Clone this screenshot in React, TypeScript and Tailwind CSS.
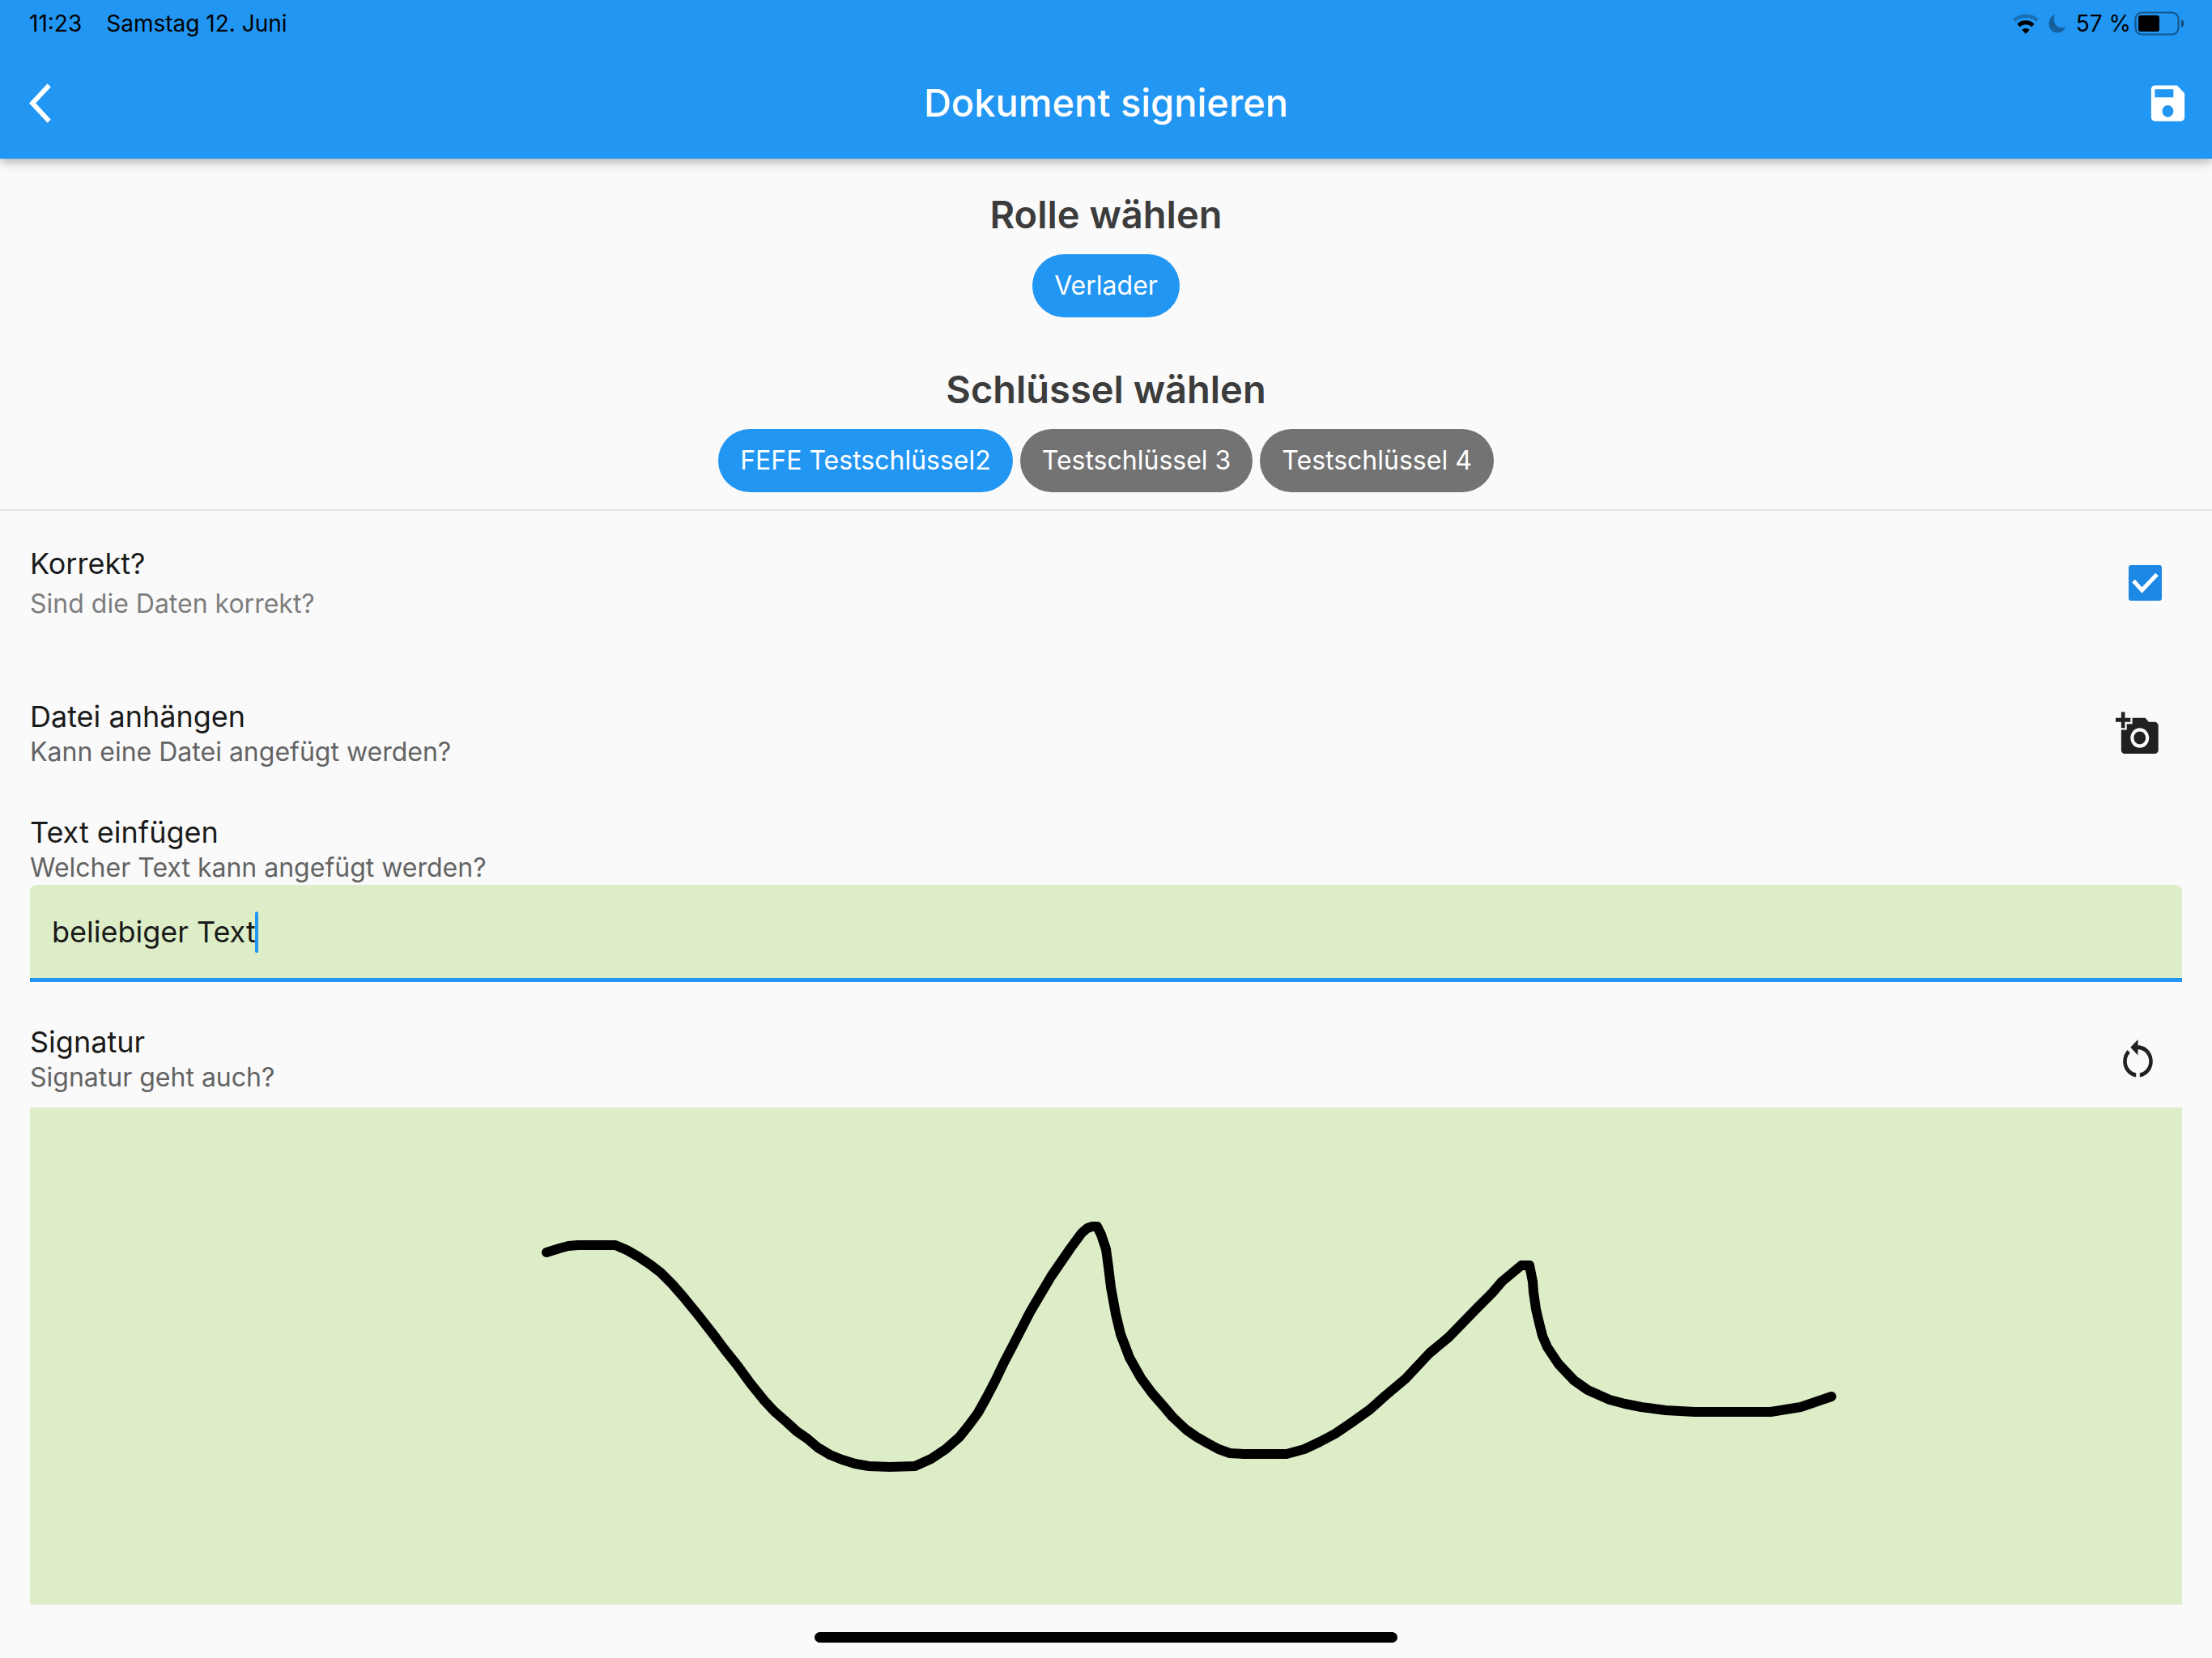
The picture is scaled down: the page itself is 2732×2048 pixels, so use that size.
import React, { useState } from "react";
import type { ReactNode } from "react";

function WifiIcon() {
  return (
    <svg className="h-[25px] w-8" viewBox="0 0 32 25" fill="none" aria-hidden="true">
      <path d="M1.500 8.500C9.500.9 22.500.9 30.500 8.500" stroke="#000" strokeOpacity=".25" strokeWidth="4.400" />
      <path d="M7 14.500c5-5 13-5 18 0" stroke="#000" strokeWidth="4.800" />
      <path d="M11.300 20c2.700-2.600 6.700-2.600 9.400 0L16 24.800z" fill="#000" />
    </svg>
  );
}

function MoonIcon() {
  return (
    <svg className="h-6 w-[22px]" viewBox="0 0 22 24" aria-hidden="true">
      <path
        d="M7.800.8C4 2.500.5 6.800.5 12.200.5 18.600 5.300 23.500 11.500 23.500c4.600 0 8.300-2.800 9.800-7.200-1.500.7-2.800.9-4.300.9-6 0-10-4-10-10.200 0-2.200.2-4.200.8-6.200z"
        fill="#000"
        fillOpacity=".35"
      />
    </svg>
  );
}

function BatteryIcon() {
  return (
    <svg className="h-[30px] w-[62px]" viewBox="0 0 62 30" fill="none" aria-hidden="true">
      <rect x="1.500" y="1.500" width="53" height="27" rx="8" stroke="#000" strokeOpacity=".42" strokeWidth="2.200" />
      <rect x="5" y="5" width="26" height="20" rx="3" fill="#000" />
      <path d="M58 10c2 .9 3.400 2.700 3.400 5s-1.400 4.100-3.400 5z" fill="#000" fillOpacity=".5" />
    </svg>
  );
}

function MaterialIcon({ d }: { d: string }) {
  return (
    <svg className="h-[59px] w-[55px]" viewBox="0 0 24 24" preserveAspectRatio="none" fill="currentColor" aria-hidden="true">
      <path d={d} />
    </svg>
  );
}

const icons = {
  back: "M11.670 3.870L9.900 2.100 0 12l9.900 9.900 1.770-1.770L3.540 12z",
  save: "M17 3H5c-1.110 0-2 .9-2 2v14c0 1.100.89 2 2 2h14c1.100 0 2-.9 2-2V7l-4-4zm-5 16c-1.660 0-3-1.340-3-3s1.340-3 3-3 3 1.340 3 3-1.340 3-3 3zm3-10H5V5h10v4z",
  addPhoto:
    "M3 4V1h2v3h3v2H5v3H3V6H0V4h3zm3 6V7h3V4h7l1.830 2H21c1.100 0 2 .9 2 2v12c0 1.100-.9 2-2 2H5c-1.100 0-2-.9-2-2V10h3zm7 9c2.760 0 5-2.240 5-5s-2.240-5-5-5-5 2.240-5 5 2.240 5 5 5zm-3.200-5c0 1.770 1.430 3.200 3.200 3.200s3.200-1.430 3.200-3.200-1.430-3.200-3.200-3.200-3.200 1.430-3.200 3.200z",
  reset:
    "M12 5V2L8 6l4 4V7c3.310 0 6 2.690 6 6 0 2.970-2.170 5.430-5 5.910v2.020c3.950-.49 7-3.850 7-7.930 0-4.420-3.580-8-8-8zM6 13c0-1.650.67-3.150 1.760-4.240L6.340 7.340C4.900 8.790 4 10.790 4 13c0 4.080 3.050 7.440 7 7.930v-2.020C8.170 18.430 6 15.970 6 13z",
};

const signaturePoints =
  "675,1547 691,1542 702,1539 714,1538 760,1538 774,1544 788,1552 803,1562 816,1572 830,1586 844,1602 862,1624 880,1647 895,1667 911,1687 927,1709 944,1730 956,1743 972,1757 984,1768 997,1777 1010,1788 1025,1797 1040,1803 1056,1808 1073,1811 1099,1812 1130,1811 1150,1802 1168,1790 1185,1775 1197,1760 1208,1745 1218,1727 1229,1706 1240,1683 1252,1660 1272,1621 1298,1577 1322,1542 1336,1523 1343,1517 1349,1515 1355,1515 1360,1525 1366,1543 1369,1565 1372,1590 1378,1623 1384,1648 1395,1677 1409,1702 1423,1721 1437,1737 1448,1750 1465,1766 1478,1775 1492,1783 1505,1790 1519,1795 1536,1796 1589,1796 1611,1790 1630,1781 1649,1771 1671,1756 1692,1741 1711,1724 1736,1703 1750,1688 1766,1671 1789,1652 1824,1616 1843,1597 1855,1583 1879,1563 1889,1563 1893,1583 1894,1596 1897,1617 1901,1634 1905,1650 1911,1664 1925,1685 1944,1705 1961,1717 1988,1729 2007,1734 2027,1738 2057,1742 2093,1744 2187,1744 2224,1738 2262,1725";

function ChoiceGroup({ title, options, initial }: { title: string; options: string[]; initial: string }) {
  const [selected, setSelected] = useState(initial);
  return (
    <section className="flex flex-col items-center gap-[21px]">
      <h2 className="text-[47px] leading-[56px] font-semibold text-[#3c3c3c]">{title}</h2>
      <div className="flex gap-[9px]">
        {options.map((option) => (
          <button
            key={option}
            type="button"
            aria-pressed={option === selected}
            onClick={() => setSelected(option)}
            className="h-[78px] rounded-full bg-[#737373] px-[27px] text-[32px] text-white aria-pressed:bg-[#2196f3]"
          >
            {option}
          </button>
        ))}
      </div>
    </section>
  );
}

function Caption({ title, hint }: { title: ReactNode; hint: string }) {
  return (
    <div>
      <h3 className="text-[36px] leading-[46px] text-[#1a1a1a]">{title}</h3>
      <p className="text-[32px] leading-[42px] text-[#636363]">{hint}</p>
    </div>
  );
}

export default function App() {
  const [checked, setChecked] = useState(true);
  const [text, setText] = useState("beliebiger Text");

  return (
    <div className="flex min-h-screen flex-col bg-[#fafafa] font-['Inter',sans-serif]">
      <header className="bg-[#2196f3] shadow-[0_4px_12px_rgba(0,0,0,0.3)]">
        <div className="flex h-[58px] items-center justify-between pr-[34px] pl-[36px] text-[28px] text-black">
          <div className="flex gap-[30px]">
            <time>11:23</time>
            <span>Samstag 12. Juni</span>
          </div>
          <div className="flex items-center">
            <WifiIcon />
            <span className="ml-3 flex">
              <MoonIcon />
            </span>
            <span className="mr-1 ml-3">57 %</span>
            <BatteryIcon />
          </div>
        </div>
        <div className="grid h-[138px] grid-cols-[1fr_auto_1fr] items-center px-[27px] text-white">
          <button type="button" aria-label="Zurück" className="justify-self-start pl-[9px]">
            <MaterialIcon d={icons.back} />
          </button>
          <h1 className="text-[47px] font-medium">Dokument signieren</h1>
          <button type="button" aria-label="Speichern" className="justify-self-end">
            <MaterialIcon d={icons.save} />
          </button>
        </div>
      </header>

      <div className="flex flex-col gap-[61px] border-b-2 border-[#e2e2e2] pt-[41px] pb-[21px]">
        <ChoiceGroup title="Rolle wählen" options={["Verlader"]} initial="Verlader" />
        <ChoiceGroup
          title="Schlüssel wählen"
          options={["FEFE Testschlüssel2", "Testschlüssel 3", "Testschlüssel 4"]}
          initial="FEFE Testschlüssel2"
        />
      </div>

      <main className="px-[37px] pt-[42px]">
        <div className="flex items-center justify-between pr-[25px]">
          <label htmlFor="korrekt">
            <span className="block text-[36px] leading-[46px] text-[#1a1a1a]">Korrekt?</span>
            <span className="mt-[6px] block text-[32px] leading-[42px] text-[#7d7d7d]">Sind die Daten korrekt?</span>
          </label>
          <span className="grid">
            <input
              id="korrekt"
              type="checkbox"
              checked={checked}
              onChange={(e) => setChecked(e.target.checked)}
              className="peer col-start-1 row-start-1 h-[44px] w-[41px] appearance-none rounded-[3px] border-4 border-[#636363] checked:border-[#1e88e5] checked:bg-[#1e88e5]"
            />
            <svg
              className="pointer-events-none invisible col-start-1 row-start-1 h-[44px] w-[41px] peer-checked:visible"
              viewBox="0 0 41 44"
              fill="none"
              aria-hidden="true"
            >
              <path d="M6 19.500L16.500 31 35 11.500" stroke="#fff" strokeWidth="5" />
            </svg>
          </span>
        </div>

        <div className="mt-[95px] flex items-center justify-between pr-[27px]">
          <Caption title="Datei anhängen" hint="Kann eine Datei angefügt werden?" />
          <button type="button" aria-label="Foto hinzufügen" className="text-[#212121]">
            <MaterialIcon d={icons.addPhoto} />
          </button>
        </div>

        <div className="mt-[55px]">
          <Caption title={<label htmlFor="freitext">Text einfügen</label>} hint="Welcher Text kann angefügt werden?" />
          <div className="relative">
            <input
              id="freitext"
              type="text"
              value={text}
              onChange={(e) => setText(e.target.value)}
              className="block h-[120px] w-full rounded-t-[8px] border-b-[5px] border-[#2196f3] bg-[#dcedc8] px-[27px] text-[36px] text-[#1a1a1a] outline-none"
            />
            <span className="pointer-events-none absolute top-[33px] left-[278px] h-[51px] w-1 rounded-full bg-[#2196f3]" />
          </div>
        </div>

        <div className="mt-[51px] flex items-center justify-between pr-[27px]">
          <Caption title="Signatur" hint="Signatur geht auch?" />
          <button type="button" aria-label="Signatur zurücksetzen" className="text-[#212121]">
            <MaterialIcon d={icons.reset} />
          </button>
        </div>

        <div className="mt-4 bg-[#dcedc8]">
          <svg className="h-[614px] w-full" viewBox="37 1368 2658 614" fill="none" role="img" aria-label="Unterschrift">
            <polyline points={signaturePoints} stroke="#000" strokeWidth="12" strokeLinecap="round" strokeLinejoin="round" />
          </svg>
        </div>
      </main>

      <div className="mt-[34px] mb-[18px] h-[13px] w-[720px] self-center rounded-full bg-black" />
    </div>
  );
}
